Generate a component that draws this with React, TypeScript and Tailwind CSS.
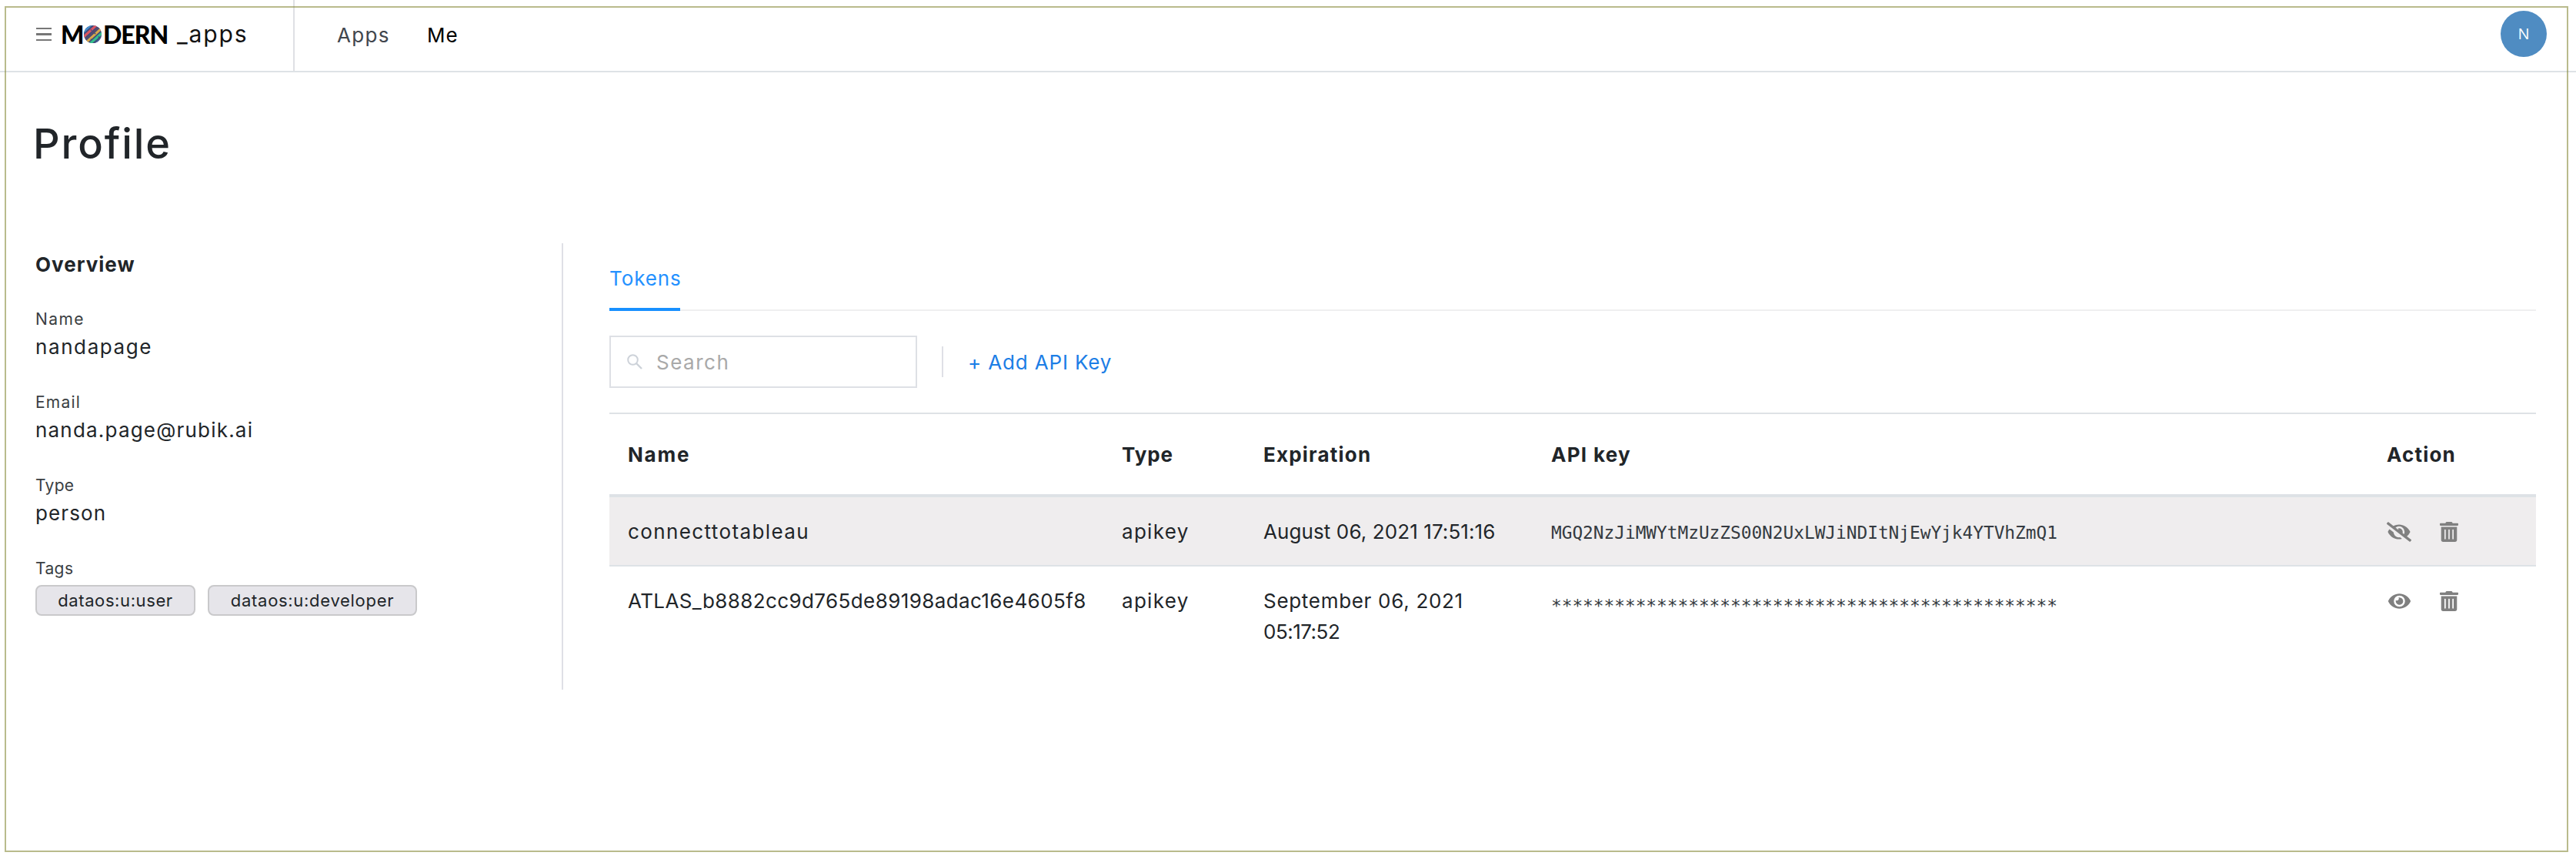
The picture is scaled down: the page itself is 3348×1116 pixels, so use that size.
import type { ReactNode } from "react";
import { FaEye, FaEyeSlash, FaTrashAlt } from "react-icons/fa";

function Field({ label, labelClass, children }: { label: string; labelClass: string; children: ReactNode }) {
  return (
    <div>
      <div className={`text-[21px] leading-[32px] text-[#3a3e42] ${labelClass}`}>{label}</div>
      {children}
    </div>
  );
}

function Value({ className, children }: { className: string; children: ReactNode }) {
  return <div className={`mt-[2px] text-[26px] leading-9 ${className}`}>{children}</div>;
}

function Tag({ className, children }: { className: string; children: ReactNode }) {
  return (
    <span
      className={`flex h-10 items-center justify-center rounded-lg border-2 border-[#c9c9cb] bg-[#e6e5ea] text-[22px] ${className}`}
    >
      {children}
    </span>
  );
}

function LogoBall() {
  return (
    <svg viewBox="0 0 24 24" className="h-[23px] w-[23px] shrink-0">
      <defs>
        <clipPath id="ball">
          <circle cx="12" cy="12" r="12" />
        </clipPath>
      </defs>
      <g clipPath="url(#ball)">
        <rect width="24" height="24" fill="#3f4c7c" />
        <g strokeWidth="3.2" fill="none">
          <path d="M-2 10L12 -3" stroke="#4590cf" />
          <path d="M-2 17L19 -2" stroke="#dd5560" />
          <path d="M0 21L23 0" stroke="#594a6c" strokeWidth="2" />
          <path d="M1 25L25 3" stroke="#d9a84a" />
          <path d="M7 26L26 9" stroke="#34c08c" />
          <path d="M14 27L27 15" stroke="#4b6aa5" />
        </g>
        <g stroke="#3f4c7c" strokeWidth="1.4" strokeDasharray="2 5">
          <path d="M4 1L24 19" />
          <path d="M-1 9L16 25" />
        </g>
      </g>
    </svg>
  );
}

function Header() {
  return (
    <header className="flex h-[94px] border-b-2 border-[#dee2e6]">
      <div className="flex w-[383px] items-center border-r-2 border-[#dfe0e4] pb-[3px] pl-[47px]">
        <div className="flex w-5 flex-col gap-[5.5px]">
          <div className="h-[2.3px] bg-[#777]" />
          <div className="h-[2.3px] bg-[#777]" />
          <div className="h-[2.3px] bg-[#777]" />
        </div>
        <div className="ml-[12px] flex w-[139px] items-center font-['Lato',sans-serif] text-[32px] leading-8 font-black text-black">
          <span className="w-[30px] shrink-0">M</span>
          <LogoBall />
          <span className="ml-[2px] tracking-[-1px]">DERN</span>
        </div>
        <span className="ml-[12px] text-[30px] tracking-[1.9px] text-[#111]">_apps</span>
      </div>
      <nav className="flex flex-1 items-center gap-[48px] pb-[2px] pl-[55px] text-[26px]">
        <span className="w-[69px] tracking-[1.3px] text-[#41464d]">Apps</span>
        <span className="tracking-[1px] text-black">Me</span>
      </nav>
      <div className="flex items-center pr-[38px] pb-1">
        <div className="flex h-[60px] w-[60px] items-center justify-center rounded-full bg-[#4f8cc2] font-['Open_Sans',sans-serif] text-[20px] text-white">
          N
        </div>
      </div>
    </header>
  );
}

function Overview() {
  return (
    <aside className="h-[580px] w-[732px] border-r-2 border-[#dfe0e6] pt-3 pl-[46px]">
      <h2 className="text-[26px] leading-[31px] font-bold tracking-[1px]">Overview</h2>
      <div className="mt-[40px] flex flex-col gap-[38px]">
        <Field label="Name" labelClass="tracking-[1.4px]">
          <Value className="tracking-[1.6px]">nandapage</Value>
        </Field>
        <Field label="Email" labelClass="tracking-[1.2px]">
          <Value className="tracking-[1.2px]">nanda.page@rubik.ai</Value>
        </Field>
        <Field label="Type" labelClass="tracking-[0.3px]">
          <Value className="tracking-[1.1px]">person</Value>
        </Field>
        <Field label="Tags" labelClass="tracking-[0.4px]">
          <div className="mt-[5px] flex gap-4">
            <Tag className="w-[208px] tracking-[0.6px]">dataos:u:user</Tag>
            <Tag className="w-[272px] tracking-[0.7px]">dataos:u:developer</Tag>
          </div>
        </Field>
      </div>
    </aside>
  );
}

function Toolbar() {
  return (
    <div className="mt-8 flex h-[68px] items-center">
      <div className="flex h-full w-[400px] items-center border-2 border-[#dee0e5] pl-[21px]">
        <svg viewBox="0 0 20 20" className="h-[20px] w-[20px]" fill="none" stroke="#cdd2d9" strokeWidth="2">
          <circle cx="7.5" cy="7.5" r="6.3" />
          <path d="M12 12L19 19" strokeWidth="2.4" />
        </svg>
        <span className="ml-[18px] text-[26px] tracking-[1.5px] text-[#a9a9a9]">Search</span>
      </div>
      <div className="ml-8 h-10 w-[2px] bg-[#dfe0e6]" />
      <button className="ml-8 text-[26px] tracking-[0.85px] text-[#1c7ee6]">+ Add API Key</button>
    </div>
  );
}

function Actions({ revealed }: { revealed: boolean }) {
  return (
    <div className="flex h-10 items-center text-[#808080]">
      <div className="flex w-8 justify-center">
        {revealed ? <FaEyeSlash className="h-[26px] w-8" /> : <FaEye className="h-[26px] w-[29px]" />}
      </div>
      <FaTrashAlt className="ml-[37px] h-[26px] w-6" preserveAspectRatio="none" />
    </div>
  );
}

const COLS = "grid grid-cols-[642px_184px_374px_1086px_1fr] pl-6";

function Tokens() {
  return (
    <table className="mt-8 block text-[26px] leading-10">
      <thead className="block">
        <tr className={`${COLS} h-[110px] items-center border-t-2 border-b-4 border-[#dee2e6] pt-[2px] text-left *:font-bold`}>
          <th className="tracking-[1.8px]">Name</th>
          <th className="tracking-[0.9px]">Type</th>
          <th className="tracking-[1.2px]">Expiration</th>
          <th className="tracking-[1.3px]">API key</th>
          <th className="tracking-[1.2px]">Action</th>
        </tr>
      </thead>
      <tbody className="block">
        <tr className={`${COLS} h-[90px] border-b-2 border-[#dee2e6] bg-[#efedee] pt-[25px]`}>
          <td className="tracking-[1.4px]">connecttotableau</td>
          <td className="tracking-[1.3px]">apikey</td>
          <td className="tracking-[0.1px]">August 06, 2021 17:51:16</td>
          <td className="pt-px font-['DejaVu_Sans_Mono',monospace] text-[22.77px] text-[#343a40]">
            MGQ2NzJiMWYtMzUzZS00N2UxLWJiNDItNjEwYjk4YTVhZmQ1
          </td>
          <td>
            <Actions revealed />
          </td>
        </tr>
        <tr className={`${COLS} pt-[25px]`}>
          <td className="tracking-[0.4px]">ATLAS_b8882cc9d765de89198adac16e4605f8</td>
          <td className="tracking-[1.3px]">apikey</td>
          <td className="tracking-[0.7px]">
            September 06, 2021
            <br />
            <span className="tracking-[-0.5px]">05:17:52</span>
          </td>
          <td className="pt-[6px] font-['DejaVu_Sans_Mono',monospace] text-[22.77px] text-[#343a40]">
            ************************************************
          </td>
          <td>
            <Actions revealed={false} />
          </td>
        </tr>
      </tbody>
    </table>
  );
}

export default function App() {
  return (
    <div className="relative h-[1116px] w-[3348px] overflow-hidden bg-white font-['Inter',sans-serif] text-[#212529]">
      <Header />
      <h1 className="mt-[61px] ml-[43px] text-[54px] leading-[64px] font-medium tracking-[1.9px]">Profile</h1>
      <main className="mt-[97px] flex">
        <Overview />
        <section className="ml-[60px] w-[2504px]">
          <div className="flex h-[88px] items-stretch">
            <div className="flex items-center border-b-4 border-[#1890ff] pt-[6px] text-[26px] text-[#2491ff]">
              <span className="w-[92px] tracking-[0.9px]">Tokens</span>
            </div>
            <div className="flex-1 border-b-2 border-[#efeff0]" />
          </div>
          <Toolbar />
          <Tokens />
        </section>
      </main>
      <div className="pointer-events-none absolute top-2 left-[6px] h-[1099px] w-[3332px] border-2 border-[#7f842d]/55" />
    </div>
  );
}
